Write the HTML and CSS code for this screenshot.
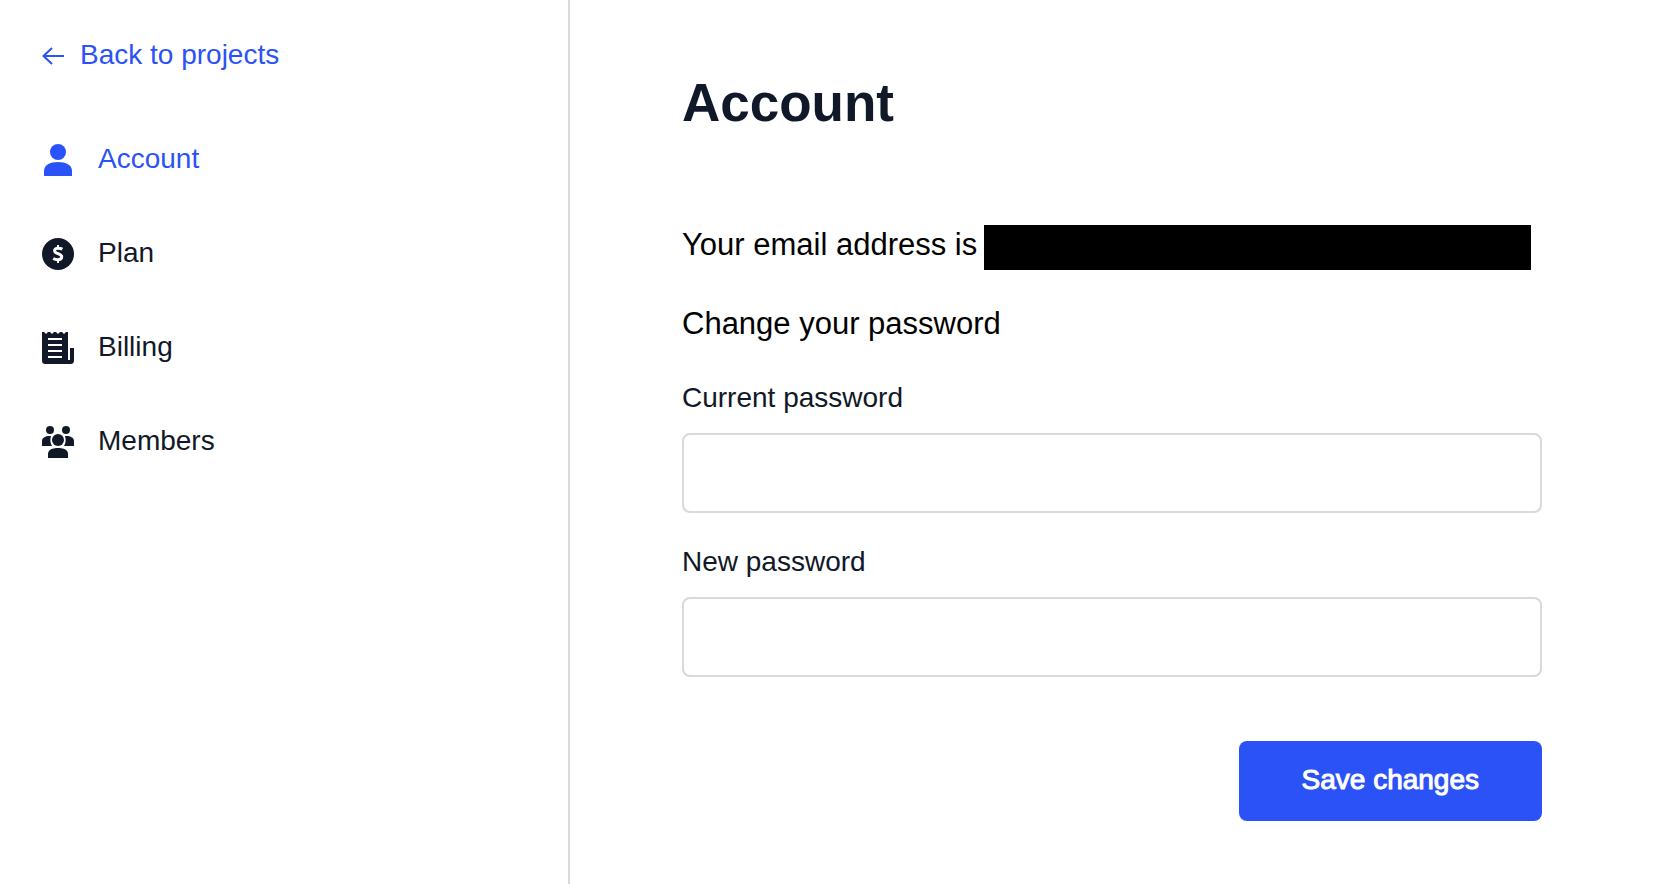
FILE: index.html
```html
<!DOCTYPE html>
<html lang="en">
<head>
    <meta charset="UTF-8">
    <meta name="viewport" content="width=device-width, initial-scale=1.0">
    <title>Account</title>
    <link rel="stylesheet" href="styles.css">
</head>
<body>
    <aside class="sidebar">
        <a href="#" class="back-link">
            <svg class="arrow" viewBox="0 0 24 32" fill="none" stroke="currentColor" stroke-width="2">
                <path d="M22 16H2M10 8L1.500 16L10 24"/>
            </svg>
            <span>Back to projects</span>
        </a>

        <nav class="menu">
            <a href="#" class="menu-item active">
                <svg class="icon" viewBox="0 0 32 32" fill="currentColor">
                    <circle cx="16" cy="8" r="8"/>
                    <path d="M2 32V27C2 21 8 18 16 18S30 21 30 27V32Z"/>
                </svg>
                <span>Account</span>
            </a>
            <a href="#" class="menu-item">
                <svg class="icon" viewBox="0 0 32 32">
                    <circle cx="16" cy="16" r="16" fill="currentColor"/>
                    <path d="M20.400 11.200C19 10.500 17.600 10.200 16 10.200C13.800 10.200 12.600 11.200 12.600 12.700C12.600 16.300 19.700 14.900 19.700 18.800C19.700 20.700 18.300 21.700 15.900 21.700C14.200 21.700 12.600 21.300 11.200 20.500" fill="none" stroke="#fff" stroke-width="3"/>
                    <path d="M16 7V10M16 22V25" stroke="#fff" stroke-width="2"/>
                </svg>
                <span>Plan</span>
            </a>
            <a href="#" class="menu-item">
                <svg class="icon" viewBox="0 0 32 32">
                    <path d="M0 0H2L4 2L6 0H8L10 2L12 0H14L16 2L18 0H20L22 2L24 0H26V28H28V16H32V28C32 31 31 32 28 32H4C1 32 0 31 0 28Z" fill="currentColor"/>
                    <path d="M6 7H20M6 13H20M6 19H20M6 25H20" stroke="#fff" stroke-width="2"/>
                </svg>
                <span>Billing</span>
            </a>
            <a href="#" class="menu-item">
                <svg class="icon" viewBox="0 0 32 32" fill="currentColor">
                    <circle cx="8" cy="4" r="4"/>
                    <circle cx="24" cy="4" r="4"/>
                    <circle cx="16" cy="14" r="6"/>
                    <path d="M0 20V15C0 12 3 10 8 10H9C8 13 8 17 10 20Z"/>
                    <path d="M32 20V15C32 12 29 10 24 10H23C24 13 24 17 22 20Z"/>
                    <path d="M6 32V28C6 24 10 22 16 22S26 24 26 28V32Z"/>
                </svg>
                <span>Members</span>
            </a>
        </nav>
    </aside>

    <main class="content">
        <h1>Account</h1>

        <p class="email">
            <span>Your email address is</span>
            <span class="redacted"></span>
        </p>

        <form>
            <h2>Change your password</h2>
            <div class="field">
                <label for="current-password">Current password</label>
                <input type="password" id="current-password">
            </div>
            <div class="field">
                <label for="new-password">New password</label>
                <input type="password" id="new-password">
            </div>
            <button type="submit" class="btn">Save changes</button>
        </form>
    </main>
</body>
</html>
```

FILE: styles.css
```css
* {
    box-sizing: border-box;
}

body {
    margin: 0;
    min-height: 100vh;
    display: flex;
    font-family: "Liberation Sans", Arial, sans-serif;
    font-size: 28px;
    color: #111827;
    background: #fff;
}

a {
    color: inherit;
    text-decoration: none;
}

.sidebar {
    width: 570px;
    flex-shrink: 0;
    padding: 40px 42px;
    border-right: 2px solid #d8d8df;
}

.back-link,
.menu-item {
    display: flex;
    align-items: flex-start;
    height: 32px;
    line-height: 30px;
}

.back-link {
    gap: 14px;
    color: #2b52f6;
}

.arrow {
    width: 24px;
    height: 32px;
}

.menu {
    display: flex;
    flex-direction: column;
    gap: 62px;
    margin-top: 72px;
}

.menu-item {
    gap: 24px;
}

.menu-item.active {
    color: #2b52f6;
}

.icon {
    width: 32px;
    height: 32px;
}

.content {
    flex: 1;
    padding: 73px 120px 40px 112px;
}

h1 {
    margin: 0;
    font-size: 53px;
    line-height: 60px;
}

.email {
    display: flex;
    align-items: flex-start;
    gap: 7px;
    margin: 92px 0 34px;
    font-size: 31px;
    line-height: 40px;
    color: #000;
}

.redacted {
    flex: 1;
    height: 45px;
    margin-right: 11px;
    background: #000;
}

form {
    display: flex;
    flex-direction: column;
}

h2 {
    margin: 0 0 37px;
    font-size: 31px;
    font-weight: 400;
    line-height: 40px;
    color: #000;
}

.field {
    display: flex;
    flex-direction: column;
    gap: 18px;
    margin-bottom: 32px;
}

label {
    line-height: 34px;
}

input {
    width: 100%;
    height: 80px;
    padding: 0 24px;
    border: 2px solid #d8d8df;
    border-radius: 8px;
    font: inherit;
    background: #fff;
}

input:focus {
    border-color: #2b52f6;
    outline: none;
}

.btn {
    align-self: flex-end;
    height: 80px;
    margin-top: 32px;
    padding: 0 63px 2px;
    border: none;
    border-radius: 8px;
    font: inherit;
    color: #fff;
    background: #2b52f6;
    -webkit-text-stroke: 1px #fff;
    cursor: pointer;
}
```
